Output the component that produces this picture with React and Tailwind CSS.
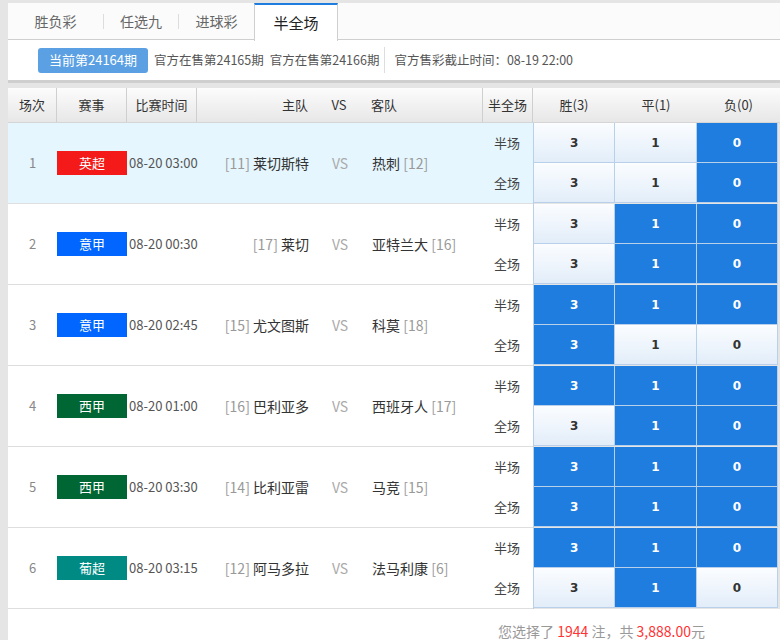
const matches = [
  { no: 1, league: '英超', color: 'bg-[#f51a1a]', time: '08-20 03:00', hr: 11, home: '莱切斯特', away: '热刺', ar: 12, half: [0, 0, 1], full: [0, 0, 1], active: true },
  { no: 2, league: '意甲', color: 'bg-[#0066ff]', time: '08-20 00:30', hr: 17, home: '莱切', away: '亚特兰大', ar: 16, half: [0, 1, 1], full: [0, 1, 1] },
  { no: 3, league: '意甲', color: 'bg-[#0066ff]', time: '08-20 02:45', hr: 15, home: '尤文图斯', away: '科莫', ar: 18, half: [1, 1, 1], full: [1, 0, 0] },
  { no: 4, league: '西甲', color: 'bg-[#006633]', time: '08-20 01:00', hr: 16, home: '巴利亚多', away: '西班牙人', ar: 17, half: [1, 1, 1], full: [0, 1, 1] },
  { no: 5, league: '西甲', color: 'bg-[#006633]', time: '08-20 03:30', hr: 14, home: '比利亚雷', away: '马竞', ar: 15, half: [1, 1, 1], full: [1, 1, 1] },
  { no: 6, league: '葡超', color: 'bg-[#008a84]', time: '08-20 03:15', hr: 12, home: '阿马多拉', away: '法马利康', ar: 6, half: [1, 1, 1], full: [0, 1, 0] },
];

const values = ['3', '1', '0'];

function PickRow({ picks }) {
  return (
    <div className="flex h-[40px] border-b border-[#b9d0ea]">
      {picks.map((on, i) => (
        <div
          key={i}
          className={
            'flex flex-1 items-center justify-center border-r border-[#b9d0ea] text-[12px] font-bold font-["DejaVu_Sans",sans-serif] ' +
            (on ? 'bg-[#1f7ddf] text-white' : 'bg-gradient-to-b from-[#fbfdff] to-[#e2edf9] text-[#333]')
          }
        >
          {values[i]}
        </div>
      ))}
    </div>
  );
}

function MatchRow({ m }) {
  return (
    <div className="flex h-[81px]">
      <div className={'flex w-[525px] items-center border-b border-[#dedede] ' + (m.active ? 'bg-[#e5f6fe]' : 'bg-white')}>
        <div className="w-[49px] text-center text-[13px] text-[#888]">{m.no}</div>
        <div className="flex w-[70px] justify-end">
          <div className={'flex h-[24px] w-[70px] items-center justify-center text-[13px] text-white ' + m.color}>{m.league}</div>
        </div>
        <div className="w-[70px] whitespace-nowrap pl-[2px] text-[13px] text-[#555]">{m.time}</div>
        <div className="w-[118px] whitespace-nowrap pr-[6px] text-right text-[14px] text-[#333]">
          <span className="text-[#999]">[{m.hr}]</span> {m.home}
        </div>
        <div className="w-[50px] text-center text-[14px] text-[#aaa]">VS</div>
        <div className="w-[118px] whitespace-nowrap pl-[7px] text-[14px] text-[#333]">
          {m.away} <span className="text-[#999]">[{m.ar}]</span>
        </div>
        <div className="flex h-full w-[50px] flex-col text-[13px] text-[#444]">
          <div className="flex flex-1 items-center justify-end pr-[13px]">半场</div>
          <div className="flex flex-1 items-center justify-end pr-[13px]">全场</div>
        </div>
      </div>
      <div className="flex w-[245px] flex-col border-l border-[#b9d0ea]">
        <PickRow picks={m.half} />
        <PickRow picks={m.full} />
      </div>
    </div>
  );
}

export default function App() {
  return (
    <div className='h-[640px] w-[780px] overflow-hidden bg-[#e5e5e5] pl-2 pt-[3px] font-["Noto_Sans_CJK_SC","Noto_Sans",sans-serif]'>
      {/* Tabs */}
      <div className="flex h-[37px] items-center border-b border-[#cfcfcf] bg-[#fbfbfb] text-[14px] text-[#666]">
        <div className="w-[95px] text-center">胜负彩</div>
        <div className="h-[15px] w-px bg-[#ddd]"></div>
        <div className="w-[74px] text-center">任选九</div>
        <div className="h-[15px] w-px bg-[#ddd]"></div>
        <div className="w-[75px] text-center">进球彩</div>
        <div className="-mb-px flex h-[38px] w-[84px] items-center justify-center self-start border-x border-t-2 border-x-[#cfcfcf] border-t-[#1f7ddf] bg-white text-[15px] text-[#222]">
          半全场
        </div>
      </div>

      {/* Issue bar */}
      <div className="flex h-[43px] items-center border-b-[3px] border-[#cfcfcf] bg-white pl-[30px] text-[12.5px] text-[#555]">
        <div className="flex h-[25px] w-[110px] items-center justify-center rounded-[3px] bg-[#5ba0e3] text-[13px] text-white">当前第24164期</div>
        <div className="ml-[6px]">官方在售第24165期</div>
        <div className="ml-[6px]">官方在售第24166期</div>
        <div className="ml-[5px] h-[26px] w-px bg-[#ddd]"></div>
        <div className="ml-[9px]">官方售彩截止时间：08-19 22:00</div>
      </div>

      <div className="h-[5px]"></div>

      {/* Table header */}
      <div className="flex h-[35px] items-center border-b border-[#d5d5d5] bg-gradient-to-b from-[#fcfcfc] to-[#e7e7e7] text-[13px] text-[#333]">
        <div className="flex h-full w-[49px] items-center justify-center border-r border-[#cfcfcf]">场次</div>
        <div className="flex h-full w-[70px] items-center justify-center border-r border-[#cfcfcf]">赛事</div>
        <div className="flex h-full w-[70px] items-center justify-center border-r border-[#cfcfcf]">比赛时间</div>
        <div className="flex h-full w-[286px] items-center border-r border-[#cfcfcf]">
          <div className="w-[117px] pr-[6px] text-right">主队</div>
          <div className="w-[50px] text-center">VS</div>
          <div className="w-[118px] pl-[7px]">客队</div>
        </div>
        <div className="flex h-full w-[50px] items-center justify-center border-r border-[#cfcfcf]">半全场</div>
        <div className="flex h-full w-[82px] items-center justify-center">胜(3)</div>
        <div className="flex h-full w-[82px] items-center justify-center">平(1)</div>
        <div className="flex h-full flex-1 items-center justify-center">负(0)</div>
      </div>

      {/* Rows */}
      <div className="w-[772px]">
        {matches.map((m) => (
          <MatchRow key={m.no} m={m} />
        ))}
      </div>

      {/* Footer */}
      <div className="flex h-[40px] justify-end bg-white pr-[75px] pt-[12px] text-[14px] text-[#999]">
        <span>
          您选择了 <span className="text-[#f33]">1944</span> 注，共 <span className="text-[#f33]">3,888.00</span>元
        </span>
      </div>
    </div>
  );
}
